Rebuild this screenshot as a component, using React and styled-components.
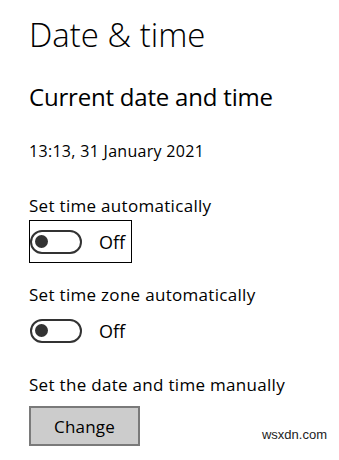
import React from 'react';
import styled, { createGlobalStyle } from 'styled-components';

const GlobalStyle = createGlobalStyle`
  html, body {
    margin: 0;
    padding: 0;
    background: #ffffff;
  }
  body {
    font-family: "Open Sans", "Noto Sans", sans-serif;
    color: #000000;
  }
`;

const Page = styled('div')`
  position: relative;
  width: 339px;
  height: 460px;
  padding: 15px 0 0 29px;
  box-sizing: border-box;
  overflow: hidden;
`;

const PageTitle = styled('h1')`
  margin: 0;
  font-size: 33px;
  font-weight: 300;
  line-height: 40px;
  letter-spacing: 0;
`;

const SectionTitle = styled('h2')`
  margin: 26px 0 0;
  font-size: 24px;
  font-weight: 400;
  line-height: 32px;
  letter-spacing: -0.2px;
`;

const CurrentTime = styled('div')`
  margin-top: 28px;
  font-size: 16px;
  line-height: 20px;
  letter-spacing: 0.3px;
`;

const Setting = styled('div')`
  margin-top: ${({ $gap }) => $gap}px;
`;

const Label = styled('div')`
  font-size: 17px;
  line-height: 24px;
  letter-spacing: 0.3px;
`;

const ToggleRow = styled('div')`
  display: inline-flex;
  align-items: center;
  gap: 17px;
  height: 43px;
  padding: 0 6px 0 0;
  margin-top: 2px;
  box-sizing: border-box;
  border: 1px solid ${({ $focused }) => ($focused ? '#000000' : 'transparent')};
`;

const Track = styled('div')`
  position: relative;
  width: 52px;
  height: 24px;
  box-sizing: border-box;
  border: 2.5px solid #333333;
  border-radius: 12px;
`;

const Knob = styled('div')`
  position: absolute;
  left: 3px;
  top: 50%;
  width: 13px;
  height: 13px;
  margin-top: -6.5px;
  border-radius: 50%;
  background: #333333;
`;

const State = styled('span')`
  font-size: 18px;
  line-height: 24px;
`;

const ChangeButton = styled('button')`
  display: block;
  margin-top: 9px;
  width: 111px;
  height: 40px;
  padding: 0;
  box-sizing: border-box;
  border: 2px solid #7a7a7a;
  background: #cccccc;
  font-family: "Open Sans", "Noto Sans", sans-serif;
  font-size: 17px;
  letter-spacing: 0.2px;
  color: #000000;
`;

const Watermark = styled('div')`
  position: absolute;
  right: 12px;
  bottom: 18px;
  font-family: "Liberation Sans", Arial, sans-serif;
  font-size: 13px;
  color: #222222;
`;

function Toggle({ label, focused, gap }) {
  return (
    <Setting $gap={gap}>
      <Label>{label}</Label>
      <ToggleRow $focused={focused}>
        <Track>
          <Knob />
        </Track>
        <State>Off</State>
      </ToggleRow>
    </Setting>
  );
}

export default function App() {
  return (
    <>
      <GlobalStyle />
      <Page>
        <PageTitle>Date &amp; time</PageTitle>
        <SectionTitle>Current date and time</SectionTitle>
        <CurrentTime>13:13, 31 January 2021</CurrentTime>
        <Toggle label="Set time automatically" focused gap={33} />
        <Toggle label="Set time zone automatically" gap={20} />
        <Setting $gap={21}>
          <Label>Set the date and time manually</Label>
          <ChangeButton>Change</ChangeButton>
        </Setting>
        <Watermark>wsxdn.com</Watermark>
      </Page>
    </>
  );
}
